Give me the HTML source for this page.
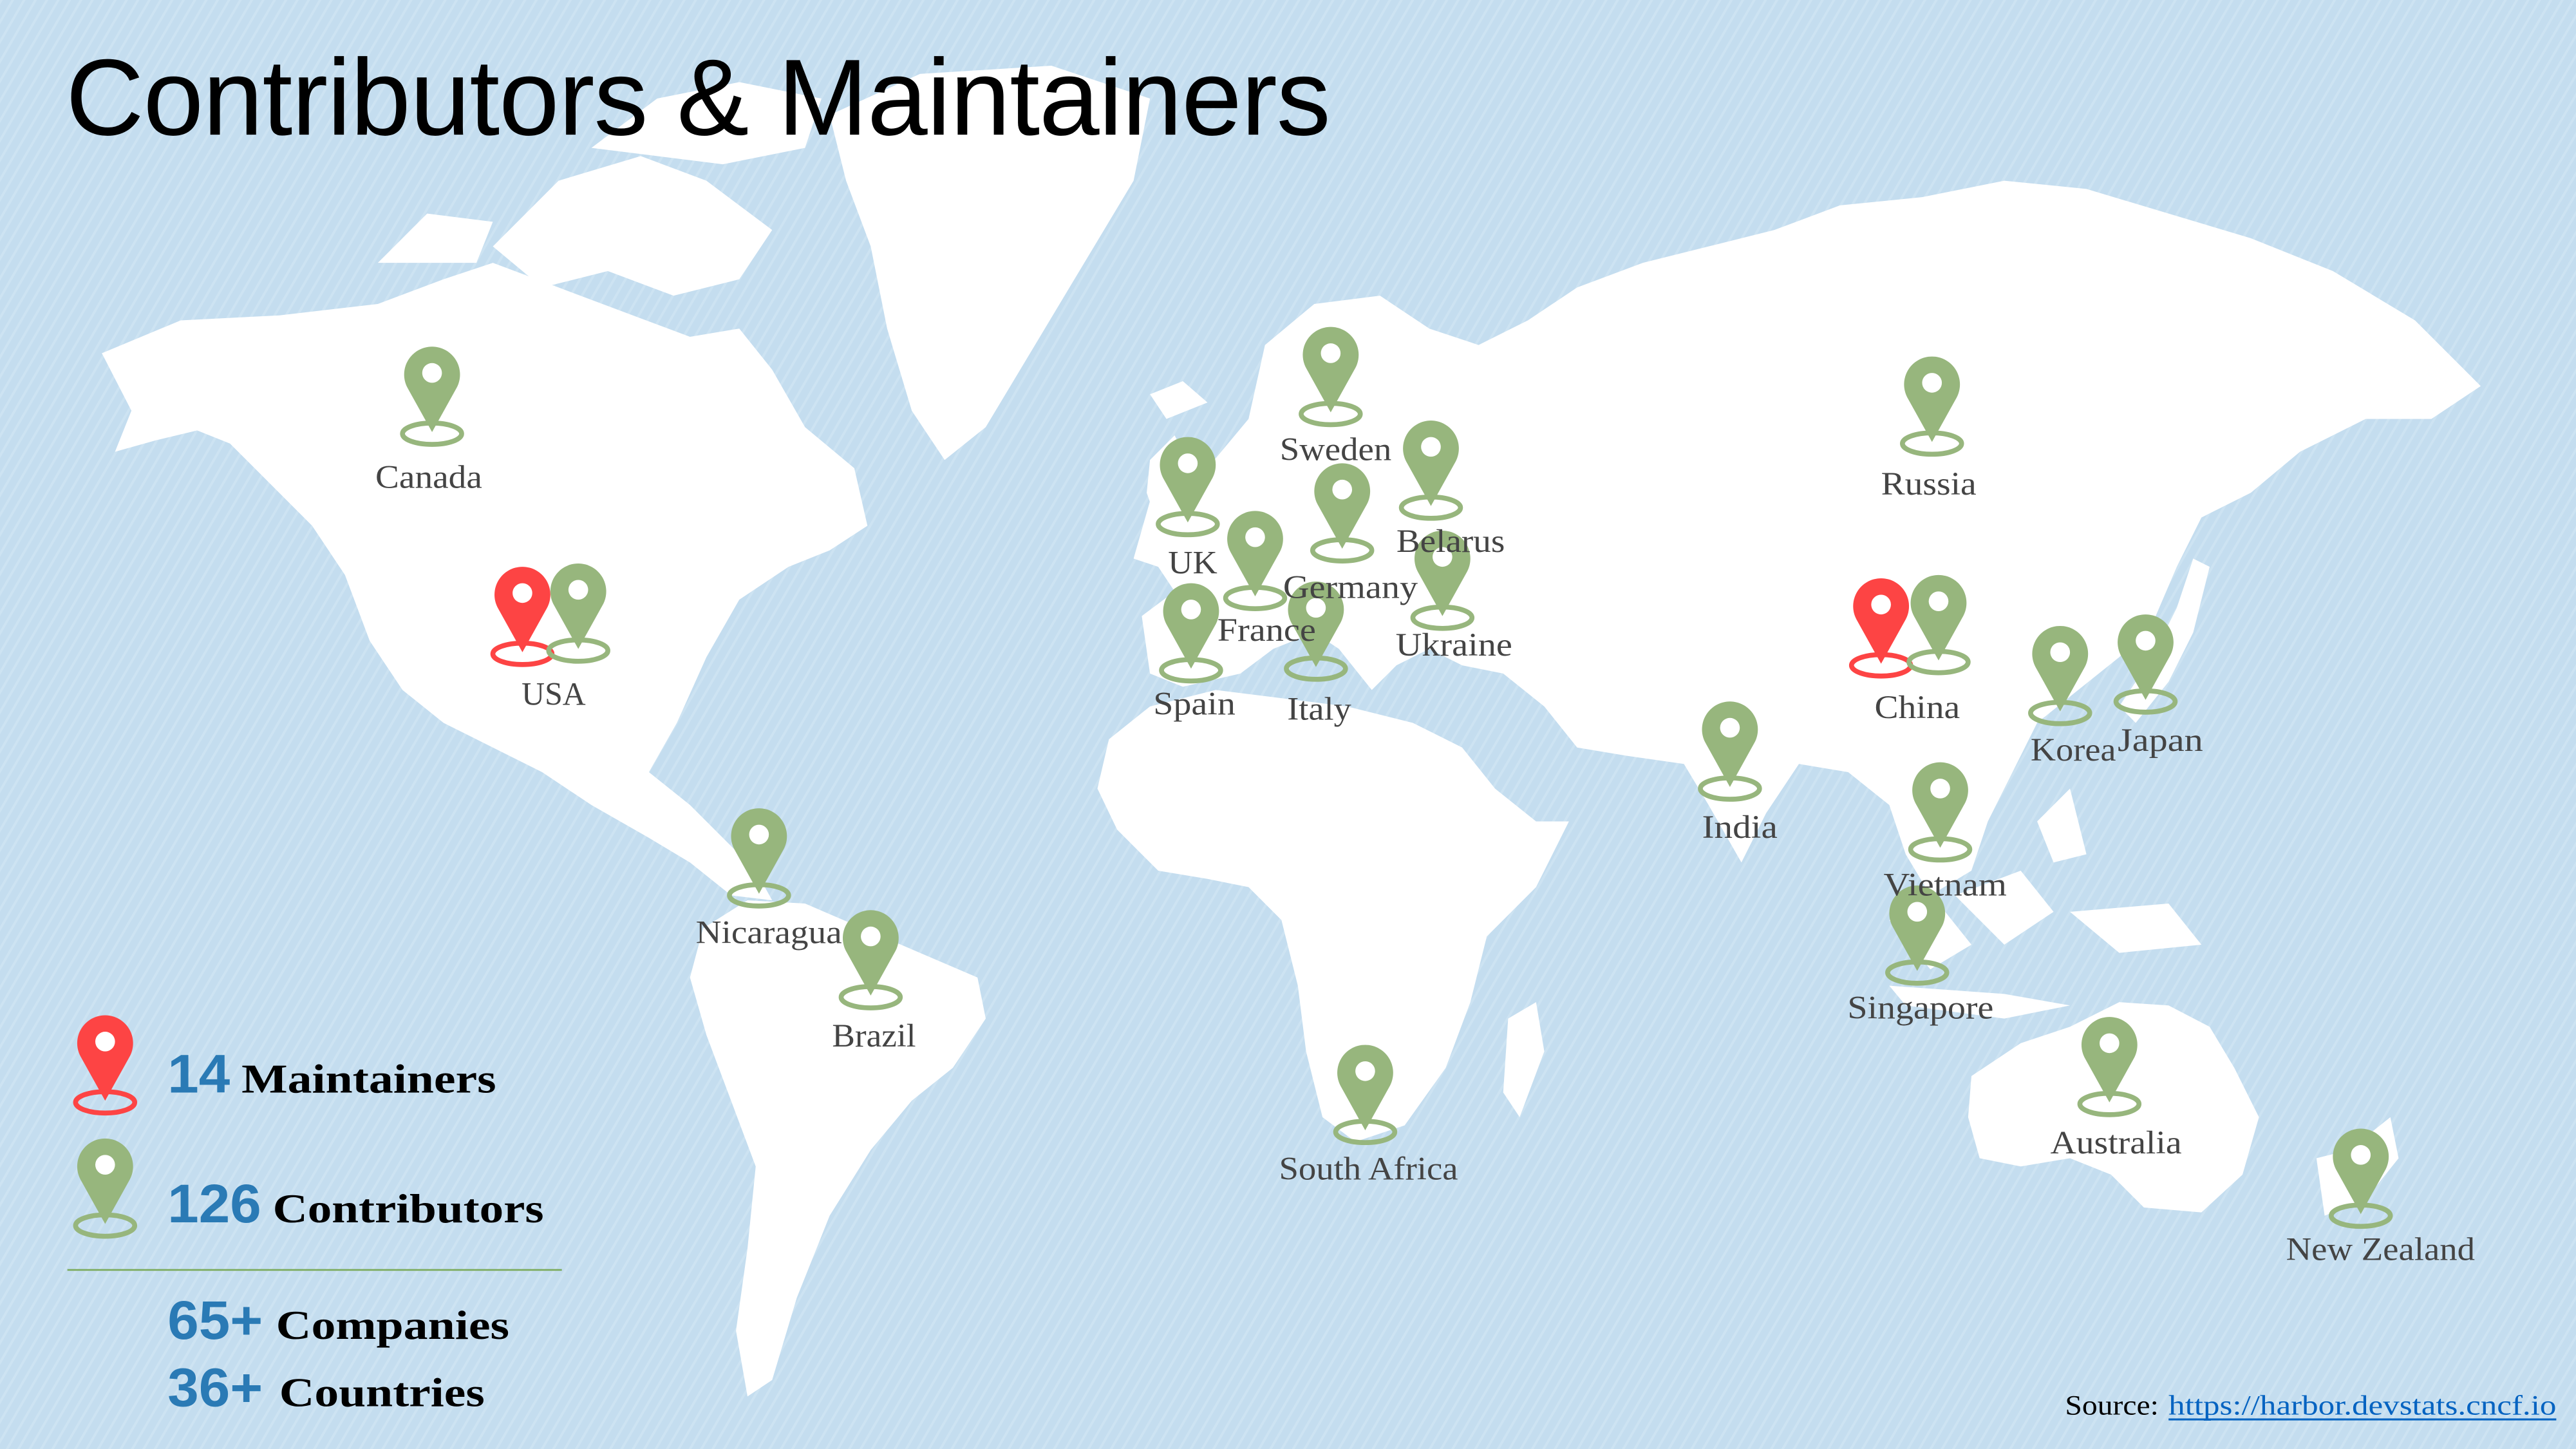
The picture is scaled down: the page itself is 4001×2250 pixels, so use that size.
<!DOCTYPE html>
<html><head><meta charset="utf-8"><style>
html,body{margin:0;padding:0;width:4001px;height:2250px;overflow:hidden;background:#c4ddef}
svg{display:block}
.lb{font-family:"Liberation Serif",serif;font-size:20px;fill:#444;text-anchor:middle}
</style></head><body>
<svg width="4001" height="2250" viewBox="0 0 1568 882" preserveAspectRatio="none" xmlns="http://www.w3.org/2000/svg">
<defs>
<pattern id="st" width="6" height="6" patternUnits="userSpaceOnUse" patternTransform="rotate(30)">
<rect width="6" height="6" fill="#c4ddef"/><rect width="1.5" height="6" fill="#cde3f2"/>
</pattern>
<g id="pg">
<ellipse cx="0" cy="1" rx="18" ry="6.5" fill="none" stroke="#97b67d" stroke-width="3"/>
<path d="M0,0 L-15,-27 A17,17 0 1,1 15,-27 Z" fill="#97b67d"/>
<circle cx="0" cy="-36" r="6" fill="#fff"/>
</g>
<g id="pr">
<ellipse cx="0" cy="1" rx="18" ry="6.5" fill="none" stroke="#fd4444" stroke-width="3"/>
<path d="M0,0 L-15,-27 A17,17 0 1,1 15,-27 Z" fill="#fd4444"/>
<circle cx="0" cy="-36" r="6" fill="#fff"/>
</g>
</defs>
<rect width="1568" height="882" fill="url(#st)"/>
<g fill="#fff">
<path d="M62,215 L110,195 L170,192 L230,185 L270,170 L300,160 L340,175 L380,190 L420,205 L450,200 L470,225 L490,260 L520,285 L528,320 L505,335 L480,345 L450,365 L430,400 L412,440 L395,470 L420,490 L440,510 L460,530 L470,548 L445,545 L420,525 L395,510 L360,490 L330,470 L300,455 L270,440 L245,420 L225,390 L210,350 L190,320 L160,290 L140,270 L120,262 L95,268 L70,275 L80,250 Z"/>
<path d="M300,150 L340,110 L390,95 L430,110 L470,140 L450,170 L410,180 L370,165 L330,175 Z"/>
<path d="M360,90 L400,60 L450,50 L500,60 L490,90 L440,100 L400,95 Z"/>
<path d="M230,160 L260,130 L300,135 L290,160 Z"/>
<path d="M505,70 L560,45 L640,40 L700,60 L690,110 L660,160 L630,210 L600,260 L575,280 L555,250 L540,200 L530,150 L515,110 Z"/>
<path d="M700,240 L720,232 L735,245 L710,255 Z"/>
<path d="M428,565 L455,548 L490,550 L525,565 L560,580 L595,595 L600,620 L580,650 L555,670 L530,700 L505,740 L485,790 L470,840 L455,850 L448,810 L455,760 L460,710 L445,670 L430,630 L420,595 Z"/>
<path d="M690,340 L700,305 L735,285 L760,255 L770,210 L800,185 L840,180 L870,200 L900,210 L930,195 L960,175 L1000,160 L1040,150 L1080,140 L1120,125 L1170,120 L1220,110 L1270,115 L1320,130 L1370,145 L1420,165 L1470,195 L1510,235 L1480,255 L1440,255 L1400,275 L1370,300 L1340,315 L1325,345 L1310,380 L1290,400 L1265,420 L1240,440 L1225,470 L1210,500 L1200,530 L1175,545 L1160,520 L1150,490 L1125,470 L1095,465 L1075,495 L1060,525 L1040,490 L1025,465 L990,460 L960,455 L940,430 L915,410 L890,405 L870,395 L850,405 L835,420 L815,395 L800,385 L775,395 L755,410 L720,418 L700,410 L695,375 L715,360 L705,345 Z"/>
<path d="M700,280 L715,265 L725,285 L722,310 L705,320 L698,300 Z"/>
<path d="M675,450 L700,430 L740,420 L780,425 L820,430 L860,440 L890,455 L910,480 L935,500 L955,500 L935,540 L905,570 L895,610 L880,650 L855,685 L825,695 L805,680 L795,640 L790,600 L780,560 L760,540 L735,535 L705,530 L680,505 L668,480 Z"/>
<path d="M918,620 L935,610 L940,640 L925,680 L915,665 Z"/>
<path d="M1290,430 L1310,400 L1325,370 L1335,340 L1345,345 L1335,385 L1320,415 L1300,440 Z"/>
<path d="M1150,560 L1180,550 L1200,575 L1175,590 Z"/>
<path d="M1190,545 L1230,530 L1250,555 L1220,575 Z"/>
<path d="M1240,500 L1260,480 L1270,520 L1250,525 Z"/>
<path d="M1260,555 L1320,550 L1340,575 L1290,580 Z"/>
<path d="M1150,600 L1220,605 L1260,612 L1220,620 L1160,612 Z"/>
<path d="M1200,655 L1230,635 L1260,625 L1290,610 L1320,612 L1345,625 L1360,650 L1375,680 L1365,715 L1340,738 L1305,735 L1285,715 L1260,705 L1230,710 L1205,705 L1198,680 Z"/>
<path d="M1410,705 L1430,700 L1455,680 L1460,705 L1440,730 L1415,740 Z"/>
</g>
<text x="40" y="82" font-family="Liberation Sans,sans-serif" font-size="66" fill="#000" textLength="770">Contributors &amp; Maintainers</text>
<g>
<use href="#pg" x="263" y="263"/>
<use href="#pr" x="318" y="397"/><use href="#pg" x="352" y="395"/>
<use href="#pg" x="810" y="251"/>
<use href="#pg" x="723" y="318"/>
<use href="#pg" x="764" y="363"/>
<use href="#pg" x="817" y="334"/>
<use href="#pg" x="871" y="308"/>
<use href="#pg" x="878" y="375"/>
<use href="#pg" x="725" y="407"/>
<use href="#pg" x="801" y="406"/>
<use href="#pg" x="1053" y="479"/>
<use href="#pg" x="1176" y="269"/>
<use href="#pr" x="1145" y="404"/><use href="#pg" x="1180" y="402"/>
<use href="#pg" x="1254" y="433"/>
<use href="#pg" x="1306" y="426"/>
<use href="#pg" x="1181" y="516"/>
<use href="#pg" x="1167" y="591"/>
<use href="#pg" x="462" y="544"/>
<use href="#pg" x="530" y="606"/>
<use href="#pg" x="831" y="688"/>
<use href="#pg" x="1284" y="671"/>
<use href="#pg" x="1437" y="739"/>
</g>
<g>
<text class="lb" x="261" y="297" textLength="65" lengthAdjust="spacingAndGlyphs">Canada</text>
<text class="lb" x="337" y="429" textLength="39" lengthAdjust="spacingAndGlyphs">USA</text>
<text class="lb" x="813" y="280" textLength="68" lengthAdjust="spacingAndGlyphs">Sweden</text>
<text class="lb" x="726" y="349" textLength="30" lengthAdjust="spacingAndGlyphs">UK</text>
<text class="lb" x="771" y="390" textLength="60" lengthAdjust="spacingAndGlyphs">France</text>
<text class="lb" x="822" y="364" textLength="82" lengthAdjust="spacingAndGlyphs">Germany</text>
<text class="lb" x="883" y="336" textLength="66" lengthAdjust="spacingAndGlyphs">Belarus</text>
<text class="lb" x="885" y="399" textLength="71" lengthAdjust="spacingAndGlyphs">Ukraine</text>
<text class="lb" x="727" y="435" textLength="50" lengthAdjust="spacingAndGlyphs">Spain</text>
<text class="lb" x="803" y="438" textLength="39" lengthAdjust="spacingAndGlyphs">Italy</text>
<text class="lb" x="1059" y="510" textLength="46" lengthAdjust="spacingAndGlyphs">India</text>
<text class="lb" x="1174" y="301" textLength="58" lengthAdjust="spacingAndGlyphs">Russia</text>
<text class="lb" x="1167" y="437" textLength="52" lengthAdjust="spacingAndGlyphs">China</text>
<text class="lb" x="1262" y="463" textLength="52" lengthAdjust="spacingAndGlyphs">Korea</text>
<text class="lb" x="1315" y="457" textLength="52" lengthAdjust="spacingAndGlyphs">Japan</text>
<text class="lb" x="1184" y="545" textLength="75" lengthAdjust="spacingAndGlyphs">Vietnam</text>
<text class="lb" x="1169" y="620" textLength="89" lengthAdjust="spacingAndGlyphs">Singapore</text>
<text class="lb" x="468" y="574" textLength="89" lengthAdjust="spacingAndGlyphs">Nicaragua</text>
<text class="lb" x="532" y="637" textLength="51" lengthAdjust="spacingAndGlyphs">Brazil</text>
<text class="lb" x="833" y="718" textLength="109" lengthAdjust="spacingAndGlyphs">South Africa</text>
<text class="lb" x="1288" y="702" textLength="80" lengthAdjust="spacingAndGlyphs">Australia</text>
<text class="lb" x="1449" y="767" textLength="115" lengthAdjust="spacingAndGlyphs">New Zealand</text>
</g>
<use href="#pr" x="64" y="670"/>
<use href="#pg" x="64" y="745"/>
<text x="102" y="665" font-family="Liberation Sans,sans-serif" font-weight="bold" font-size="33" fill="#2a7ab5" textLength="38" lengthAdjust="spacingAndGlyphs">14</text>
<text x="147" y="665" font-family="Liberation Serif,serif" font-weight="bold" font-size="25" fill="#000" textLength="155" lengthAdjust="spacingAndGlyphs">Maintainers</text>
<text x="102" y="744" font-family="Liberation Sans,sans-serif" font-weight="bold" font-size="33" fill="#2a7ab5" textLength="57" lengthAdjust="spacingAndGlyphs">126</text>
<text x="166" y="744" font-family="Liberation Serif,serif" font-weight="bold" font-size="25" fill="#000" textLength="165" lengthAdjust="spacingAndGlyphs">Contributors</text>
<line x1="41" y1="773" x2="342" y2="773" stroke="#7aaa5a" stroke-width="1"/>
<text x="102" y="815" font-family="Liberation Sans,sans-serif" font-weight="bold" font-size="33" fill="#2a7ab5" textLength="58" lengthAdjust="spacingAndGlyphs">65+</text>
<text x="168" y="815" font-family="Liberation Serif,serif" font-weight="bold" font-size="25" fill="#000" textLength="142" lengthAdjust="spacingAndGlyphs">Companies</text>
<text x="102" y="856" font-family="Liberation Sans,sans-serif" font-weight="bold" font-size="33" fill="#2a7ab5" textLength="58" lengthAdjust="spacingAndGlyphs">36+</text>
<text x="170" y="856" font-family="Liberation Serif,serif" font-weight="bold" font-size="25" fill="#000" textLength="125" lengthAdjust="spacingAndGlyphs">Countries</text>
<text x="1257" y="861" font-family="Liberation Serif,serif" font-size="17" fill="#000" textLength="57" lengthAdjust="spacingAndGlyphs">Source:</text>
<text x="1320" y="861" font-family="Liberation Serif,serif" font-size="17" fill="#0563c1" textLength="236" lengthAdjust="spacingAndGlyphs">https://harbor.devstats.cncf.io</text>
<line x1="1320" y1="864" x2="1556" y2="864" stroke="#0563c1" stroke-width="1.2"/>
</svg>
</body></html>
